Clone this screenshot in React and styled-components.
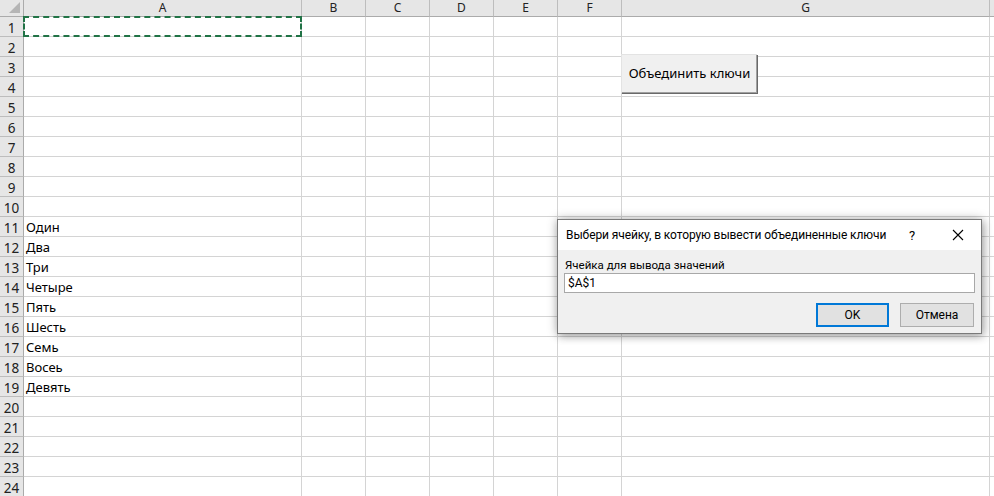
import React from "react";
import styled, { createGlobalStyle } from "styled-components";

const Global = createGlobalStyle`
  html, body { margin: 0; padding: 0; background: #fff; overflow: hidden; }
  body { font-family: "Noto Sans", "Liberation Sans", sans-serif; }
`;

const COLS = [
  { name: "A", w: 278 },
  { name: "B", w: 64 },
  { name: "C", w: 64 },
  { name: "D", w: 64 },
  { name: "E", w: 64 },
  { name: "F", w: 64 },
  { name: "G", w: 368 },
  { name: "", w: 64 },
];

const DATA = {
  11: "Один",
  12: "Два",
  13: "Три",
  14: "Четыре",
  15: "Пять",
  16: "Шесть",
  17: "Семь",
  18: "Восеь",
  19: "Девять",
};

const Page = styled.div`
  position: relative;
  width: 994px;
  height: 496px;
  overflow: hidden;
  background: #fff;
`;

const Sheet = styled.div`
  display: grid;
  grid-template-columns: 24px ${COLS.map((c) => c.w + "px").join(" ")};
  grid-auto-rows: 20px;
  grid-template-rows: 17px;
`;

const Corner = styled.div`
  position: relative;
  background: #e6e6e6;
  border-right: 1px solid #ababab;
  border-bottom: 1px solid #ababab;
  box-sizing: border-box;
  &::after {
    content: "";
    position: absolute;
    right: 3px;
    bottom: 3px;
    width: 0;
    height: 0;
    border-left: 11px solid transparent;
    border-bottom: 11px solid #b5b5b5;
  }
`;

const ColHead = styled.div`
  background: #e6e6e6;
  border-right: 1px solid #bdbdbd;
  border-bottom: 1px solid #ababab;
  box-sizing: border-box;
  display: flex;
  align-items: center;
  justify-content: center;
  font-family: "Noto Sans", sans-serif;
  font-size: 12px;
  color: #222;
  line-height: 1;
`;

const RowHead = styled.div`
  background: #e6e6e6;
  border-right: 1px solid #ababab;
  border-bottom: 1px solid #bdbdbd;
  box-sizing: border-box;
  display: flex;
  align-items: center;
  justify-content: center;
  font-family: "Noto Sans", sans-serif;
  font-size: 13.5px;
  color: #222;
  padding-top: 2px;
`;

const Cell = styled.div`
  border-right: 1px solid #d4d4d4;
  border-bottom: 1px solid #d4d4d4;
  box-sizing: border-box;
  display: flex;
  align-items: flex-end;
  padding: 0 0 0 2px;
  font-family: "Noto Sans", sans-serif;
  font-size: 13px;
  color: #000;
  white-space: nowrap;
  overflow: visible;
`;

const Marquee = styled.div`
  position: absolute;
  left: 23px;
  top: 16px;
  width: 279px;
  height: 21px;
  box-sizing: border-box;
  border: 2px dashed #217346;
`;

const SheetButton = styled.button`
  position: absolute;
  left: 621px;
  top: 54px;
  width: 136px;
  height: 39px;
  box-sizing: border-box;
  background: #f0f0f0;
  border: none;
  border-top: 1px solid #e3e3e3;
  border-left: 1px solid #e3e3e3;
  box-shadow: inset -1px -1px 0 #a0a0a0, 1px 1px 0 #696969;
  font-family: "Noto Sans", sans-serif;
  font-size: 13px;
  color: #000;
  padding: 0 0 2px 0;
  white-space: nowrap;
`;

const Dialog = styled.div`
  position: absolute;
  left: 557px;
  top: 219px;
  width: 425px;
  height: 115px;
  box-sizing: border-box;
  border: 1px solid #7a7a7a;
  background: #f0f0f0;
  box-shadow: 0 0 10px rgba(0, 0, 0, 0.28), 2px 3px 8px rgba(0, 0, 0, 0.2);
  display: flex;
  flex-direction: column;
  font-family: Roboto, "Liberation Sans", sans-serif;
`;

const TitleBar = styled.div`
  height: 30px;
  background: #fff;
  display: flex;
  align-items: center;
  padding-left: 8px;
  font-size: 12px;
  color: #000;
`;

const Title = styled.div`
  flex: 1;
  white-space: nowrap;
  letter-spacing: -0.1px;
`;

const TitleIcon = styled.div`
  width: 46px;
  display: flex;
  align-items: center;
  justify-content: center;
  font-size: 13px;
  color: #000;
`;

const Body = styled.div`
  flex: 1;
  display: flex;
  flex-direction: column;
  padding: 8px 6px 0 6px;
`;

const Label = styled.div`
  font-size: 11.5px;
  color: #000;
  height: 15px;
  white-space: nowrap;
  padding-left: 1px;
`;

const Input = styled.div`
  height: 20px;
  box-sizing: border-box;
  border: 1px solid #a8a8a8;
  background: #fff;
  font-size: 12px;
  padding: 1px 3px;
  color: #000;
  line-height: 16px;
`;

const Buttons = styled.div`
  display: flex;
  justify-content: flex-end;
  gap: 11px;
  margin-top: 10px;
  padding-right: 1px;
`;

const DlgButton = styled.div`
  width: ${(p) => p.$w}px;
  height: 24px;
  box-sizing: border-box;
  background: #e1e1e1;
  border: ${(p) => (p.$primary ? "2px solid #0078d7" : "1px solid #adadad")};
  display: flex;
  align-items: center;
  justify-content: center;
  font-size: 12px;
  color: #000;
`;

export default function App() {
  const rows = Array.from({ length: 24 }, (_, i) => i + 1);
  return (
    <Page>
      <Global />
      <Sheet>
        <Corner />
        {COLS.map((c, i) => (
          <ColHead key={i}>{c.name}</ColHead>
        ))}
        {rows.map((r) => (
          <React.Fragment key={r}>
            <RowHead>{r}</RowHead>
            {COLS.map((c, i) => (
              <Cell key={i}>{c.name === "A" ? DATA[r] || "" : ""}</Cell>
            ))}
          </React.Fragment>
        ))}
      </Sheet>
      <Marquee />
      <SheetButton>Объединить ключи</SheetButton>
      <Dialog>
        <TitleBar>
          <Title>Выбери ячейку, в которую вывести объединенные ключи</Title>
          <TitleIcon>?</TitleIcon>
          <TitleIcon>
            <svg width="12" height="12" viewBox="0 0 12 12">
              <path d="M1 1 L11 11 M11 1 L1 11" stroke="#000" strokeWidth="1.1" fill="none" />
            </svg>
          </TitleIcon>
        </TitleBar>
        <Body>
          <Label>Ячейка для вывода значений</Label>
          <Input>$A$1</Input>
          <Buttons>
            <DlgButton $primary $w={73}>OK</DlgButton>
            <DlgButton $w={74}>Отмена</DlgButton>
          </Buttons>
        </Body>
      </Dialog>
    </Page>
  );
}
